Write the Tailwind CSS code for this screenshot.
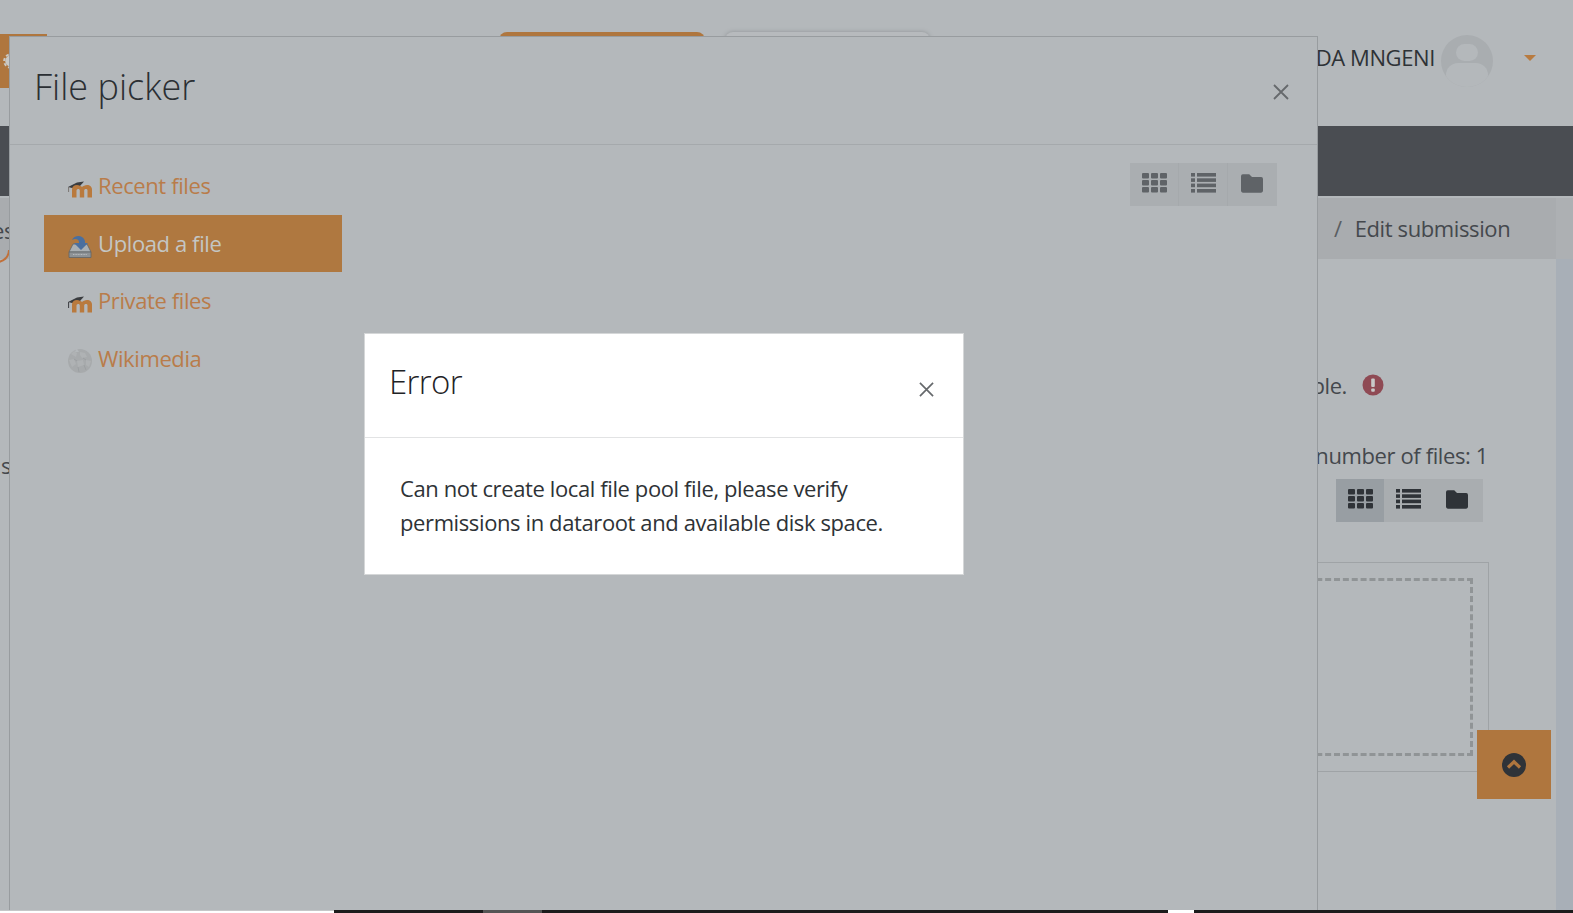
<!DOCTYPE html>
<html lang="en">
<head>
    <meta charset="UTF-8">
    <title>File picker</title>
    <script src="https://cdn.jsdelivr.net/npm/@tailwindcss/browser@4"></script>
</head>
<body class="bg-[#b4b8bb] font-['Open_Sans','Noto_Sans',sans-serif] tracking-[-0.39px]">
    <div class="relative w-[1573px] h-[913px] overflow-hidden flex flex-col">

        <!-- page behind the dialogs -->
        <header class="h-[126px] flex shrink-0">
            <div class="w-[47px] h-[54px] mt-[34px] bg-[#af763e] flex items-center">
                <svg class="w-4 h-4 ml-[3px]" viewBox="0 0 16 16"><circle cx="8" cy="8" r="5.800" fill="#c9c9c6"/><circle cx="8" cy="8" r="6.800" fill="none" stroke="#c9c9c6" stroke-width="2" stroke-dasharray="3 2.300"/></svg>
            </div>
            <div class="flex gap-[20px] ml-[452px]">
                <div class="w-[206px] h-10 mt-8 rounded-t-lg bg-[#af763e]"></div>
                <div class="w-[205px] h-10 mt-8 rounded-t-lg bg-[#b7babd] shadow-[0_0_4px_#8f9396]"></div>
            </div>
            <div class="ml-auto flex items-start pr-[37px]">
                <span class="text-[22px] leading-[30px] mt-[42px] text-[#2e3236]">AMANDA MNGENI</span>
                <div class="w-[52px] h-[52px] rounded-full bg-[#a9adb0] ml-[6px] mt-[35px] overflow-hidden relative flex flex-col items-center">
                    <div class="w-[22px] h-[22px] rounded-full bg-[#b4b8bb] mt-[9px]"></div>
                    <div class="w-[42px] h-[30px] rounded-full bg-[#b4b8bb] mt-[2px]"></div>
                </div>
                <div class="ml-[31px] mt-[55px] border-x-[6px] border-x-transparent border-t-[6px] border-t-[#b87b40]"></div>
            </div>
        </header>
        <nav class="h-[70px] shrink-0 bg-[#4a4d52]"></nav>
        <div class="h-[63px] shrink-0 flex border-t-2 border-[#b4b8bb] bg-[#adb0b3]">
            <div class="w-[1556px] bg-[#a9acaf] flex items-center">
                <span class="text-[22px] text-[#5a5e62] ml-[1334px]">/</span>
                <span class="text-[22px] text-[#44484d] ml-[13px]">Edit submission</span>
            </div>
        </div>
        <div class="flex-1 flex">
            <main class="w-[1556px] pl-[1200px]">
                <div class="flex items-center gap-[15px] mt-[112px] h-7">
                    <span class="text-[22px] text-[#44484d] w-[147px] text-right">Sample.</span>
                    <svg class="w-[22px] h-[22px]" viewBox="0 0 22 22"><circle cx="11" cy="11" r="10.500" fill="#8f4a54"/><rect x="9.200" y="4.500" width="3.600" height="8.500" rx="1" fill="#c9c9c9"/><rect x="9.200" y="14.600" width="3.600" height="3.200" rx="1" fill="#c9c9c9"/></svg>
                </div>
                <div class="mt-[42px] h-7 text-[22px] leading-7 text-[#44484d] w-[288px] text-right whitespace-nowrap">Maximum number of files: 1</div>
                <div class="flex ml-[136px] mt-[10px] w-[147px] h-[43px] bg-[#a9adb0]">
                    <div class="w-[48px] bg-[#989ea3] flex items-center justify-center pb-[3px]">
                        <svg class="w-[25px] h-[20px]" viewBox="0 0 25 20" fill="#2f3338"><rect width="7" height="5.400" rx="1"/><rect x="9" width="7" height="5.400" rx="1"/><rect x="18" width="7" height="5.400" rx="1"/><rect y="7" width="7" height="5.400" rx="1"/><rect x="9" y="7" width="7" height="5.400" rx="1"/><rect x="18" y="7" width="7" height="5.400" rx="1"/><rect y="14" width="7" height="5.400" rx="1"/><rect x="9" y="14" width="7" height="5.400" rx="1"/><rect x="18" y="14" width="7" height="5.400" rx="1"/></svg>
                    </div>
                    <div class="w-[49px] flex items-center justify-center pb-[3px]">
                        <svg class="w-[25px] h-[20px]" viewBox="0 0 25 20" fill="#2f3338"><rect width="4" height="3.600"/><rect x="6" width="19" height="3.600"/><rect y="5.300" width="4" height="3.600"/><rect x="6" y="5.300" width="19" height="3.600"/><rect y="10.600" width="4" height="3.600"/><rect x="6" y="10.600" width="19" height="3.600"/><rect y="16" width="4" height="3.600"/><rect x="6" y="16" width="19" height="3.600"/></svg>
                    </div>
                    <div class="w-[50px] flex items-center justify-center pb-[3px] pr-[2px]">
                        <svg class="w-[22px] h-[19px]" viewBox="0 0 24 20" fill="#2f3338"><path d="M2 0h7l3 3h10a2 2 0 0 1 2 2v13a2 2 0 0 1-2 2H2a2 2 0 0 1-2-2V2a2 2 0 0 1 2-2z"/></svg>
                    </div>
                </div>
                <div class="mt-[40px] w-[289px] h-[210px] border border-[#9fa3a6] pr-[15px] pt-[15px]">
                    <div class="h-[178px] border-[3px] border-dashed border-[#909496]"></div>
                </div>
            </main>
            <div class="flex-1 bg-[#a8afb7]"></div>
        </div>

        <!-- clipped text peeking out left of the picker -->
        <span class="absolute left-[-8px] top-[214px] text-[22px] text-[#44484d]">es</span>
        <span class="absolute left-[-14px] top-[250px] w-6 h-[13px] border-b-2 border-r-2 border-[#c0703a] rounded-br-full"></span>
        <span class="absolute left-[1px] top-[449px] text-[22px] text-[#44484d]">s</span>

        <!-- back to top -->
        <button class="absolute left-[1477px] top-[730px] w-[74px] h-[69px] bg-[#af763e] flex items-center justify-center">
            <svg class="w-6 h-6" viewBox="0 0 24 24"><circle cx="12" cy="12" r="12" fill="#2f3338"/><path d="M6 14.500 12 8.800l6 5.700" fill="none" stroke="#af763e" stroke-width="3.200"/></svg>
        </button>

        <!-- taskbar remnant along the bottom edge -->
        <div class="absolute left-0 right-0 bottom-0 h-[3px] flex">
            <div class="w-[334px] bg-white border-t border-[#c5c7c8]"></div>
            <div class="w-[149px] bg-[#1c1c1c]"></div>
            <div class="w-[59px] bg-[#555555]"></div>
            <div class="w-[626px] bg-[#1c1c1c]"></div>
            <div class="w-[26px] bg-white"></div>
            <div class="flex-1 bg-[#1c1c1c]"></div>
        </div>

        <!-- file picker dialog -->
        <section class="absolute left-[9px] top-[36px] w-[1309px] h-[874px] bg-[#b4b8bb] border border-[#989c9f] border-b-0">
            <div class="h-[108px] border-b border-[#a5a9ac] flex justify-between pl-[24px] pr-[28px]">
                <h1 class="text-[36px] font-light tracking-normal leading-[50px] mt-[25px] text-[#2b2f33]">File picker</h1>
                <svg class="w-[16px] h-[16px] mt-[47px]" viewBox="0 0 16 16"><path d="M1 1l14 14M15 1 1 15" stroke="#66696c" stroke-width="1.800"/></svg>
            </div>
            <div class="flex justify-between pr-[40px]">
                <ul class="w-[298px] ml-[34px] mt-[13px] text-[22px]">
                    <li class="h-[57px] flex items-center pl-[24px] gap-[6px] text-[#b97c4a] pb-[2px]">
                        <svg class="w-6 h-6 translate-y-[2px]" viewBox="0 0 24 24"><path d="M0 11 9 6.500l7-1L12 10l-5 2.500-3-.5z" fill="#3a3c3f"/><path d="M.6 11v5" stroke="#6b6560" stroke-width=".8"/><path d="M4 21.500v-8C4 10.500 6 9 9 9c2 0 4 1 5 2 1-1 3-2 5-2 3 0 5 2 5 4.500v8h-4.500v-7c0-1-.5-1.500-1.500-1.500s-1.800.5-1.800 1.500v7h-4.400v-7c0-1-.8-1.500-1.300-1.500-1 0-2 .5-2 1.500v7z" fill="#b97a3e"/></svg>
                        Recent files
                    </li>
                    <li class="h-[57px] bg-[#af7840] flex items-center pl-[24px] gap-[6px] text-[#c4c6c4]">
                        <svg class="w-6 h-6 translate-y-[3px]" viewBox="0 0 24 24"><path d="M5 9h14l4 8H1z" fill="#aab0b4" stroke="#5f6468" stroke-width=".8"/><path d="M1 17h22v5.500H1z" fill="#8d9296" stroke="#5f6468" stroke-width=".8"/><path d="M5 19.500h14" stroke="#b6babd" stroke-width="1.200" stroke-dasharray="1 .6"/><path d="M4 5C6 0 15-1 17 6v2h3l-7 7-7-7h5V7C11 4 7 3 4 5z" fill="#4a6f9f"/></svg>
                        Upload a file
                    </li>
                    <li class="h-[57px] flex items-center pl-[24px] gap-[6px] text-[#b97c4a]">
                        <svg class="w-6 h-6 translate-y-[2px]" viewBox="0 0 24 24"><path d="M0 11 9 6.500l7-1L12 10l-5 2.500-3-.5z" fill="#3a3c3f"/><path d="M.6 11v6" stroke="#3a3c3f"/><path d="M4 21.500v-8C4 10.500 6 9 9 9c2 0 4 1 5 2 1-1 3-2 5-2 3 0 5 2 5 4.500v8h-4.500v-7c0-1-.5-1.500-1.500-1.500s-1.800.5-1.800 1.500v7h-4.400v-7c0-1-.8-1.500-1.300-1.500-1 0-2 .5-2 1.500v7z" fill="#b97a3e"/></svg>
                        Private files
                    </li>
                    <li class="h-[58px] flex items-center pl-[24px] gap-[6px] text-[#b97c4a]">
                        <svg class="w-6 h-6 translate-y-[3px]" viewBox="0 0 24 24"><circle cx="12" cy="12" r="12" fill="#a7aaac"/><path d="M3 5 6 2l3 2-1 4zM12 3l5 1 2 4-5 1-2-3zM1 11l5-1 2 5-4 3zM9 12l6-1 1 5-6 2zM18 11l5 1-2 6-3-2z" fill="#afb2b4"/><path d="M8.500-1 11 3H7z" fill="#b4b8bb"/><path d="M6 10l3 2M15 9l3 2M10 18l1 5M16 16l2 5" stroke="#94979a" stroke-width=".6"/></svg>
                        Wikimedia
                    </li>
                </ul>
                <div class="flex w-[147px] h-[43px] mt-[18px] bg-[#aaaeb1] divide-x divide-[#a5a9ac]">
                    <div class="w-[49px] flex items-center justify-center pb-[3px]">
                        <svg class="w-[25px] h-[20px]" viewBox="0 0 25 20" fill="#5f6367"><rect width="7" height="5.400" rx="1"/><rect x="9" width="7" height="5.400" rx="1"/><rect x="18" width="7" height="5.400" rx="1"/><rect y="7" width="7" height="5.400" rx="1"/><rect x="9" y="7" width="7" height="5.400" rx="1"/><rect x="18" y="7" width="7" height="5.400" rx="1"/><rect y="14" width="7" height="5.400" rx="1"/><rect x="9" y="14" width="7" height="5.400" rx="1"/><rect x="18" y="14" width="7" height="5.400" rx="1"/></svg>
                    </div>
                    <div class="w-[49px] flex items-center justify-center pb-[3px]">
                        <svg class="w-[25px] h-[20px]" viewBox="0 0 25 20" fill="#5f6367"><rect width="4" height="3.600"/><rect x="6" width="19" height="3.600"/><rect y="5.300" width="4" height="3.600"/><rect x="6" y="5.300" width="19" height="3.600"/><rect y="10.600" width="4" height="3.600"/><rect x="6" y="10.600" width="19" height="3.600"/><rect y="16" width="4" height="3.600"/><rect x="6" y="16" width="19" height="3.600"/></svg>
                    </div>
                    <div class="w-[49px] flex items-center justify-center pb-[3px] pr-[2px]">
                        <svg class="w-[22px] h-[19px]" viewBox="0 0 24 20" fill="#5f6367"><path d="M2 0h7l3 3h10a2 2 0 0 1 2 2v13a2 2 0 0 1-2 2H2a2 2 0 0 1-2-2V2a2 2 0 0 1 2-2z"/></svg>
                    </div>
                </div>
            </div>
        </section>

        <!-- error dialog -->
        <section class="absolute left-[364px] top-[333px] w-[600px] h-[242px] bg-white border border-[#d5d7d8]">
            <div class="h-[104px] border-b border-[#e2e3e4] flex justify-between pl-[24px] pr-[29px]">
                <h2 class="text-[33px] font-light tracking-[-0.6px] leading-[46px] mt-[25px] text-[#1f2326]">Error</h2>
                <svg class="w-[15px] h-[15px] mt-[48px]" viewBox="0 0 16 16"><path d="M1 1l14 14M15 1 1 15" stroke="#66696c" stroke-width="1.800"/></svg>
            </div>
            <p class="pl-[35px] pt-[33px] text-[22px] leading-[34px] text-[#2e3236] whitespace-nowrap">Can not create local file pool file, please verify<br>permissions in dataroot and available disk space.</p>
        </section>
    </div>
</body>
</html>
